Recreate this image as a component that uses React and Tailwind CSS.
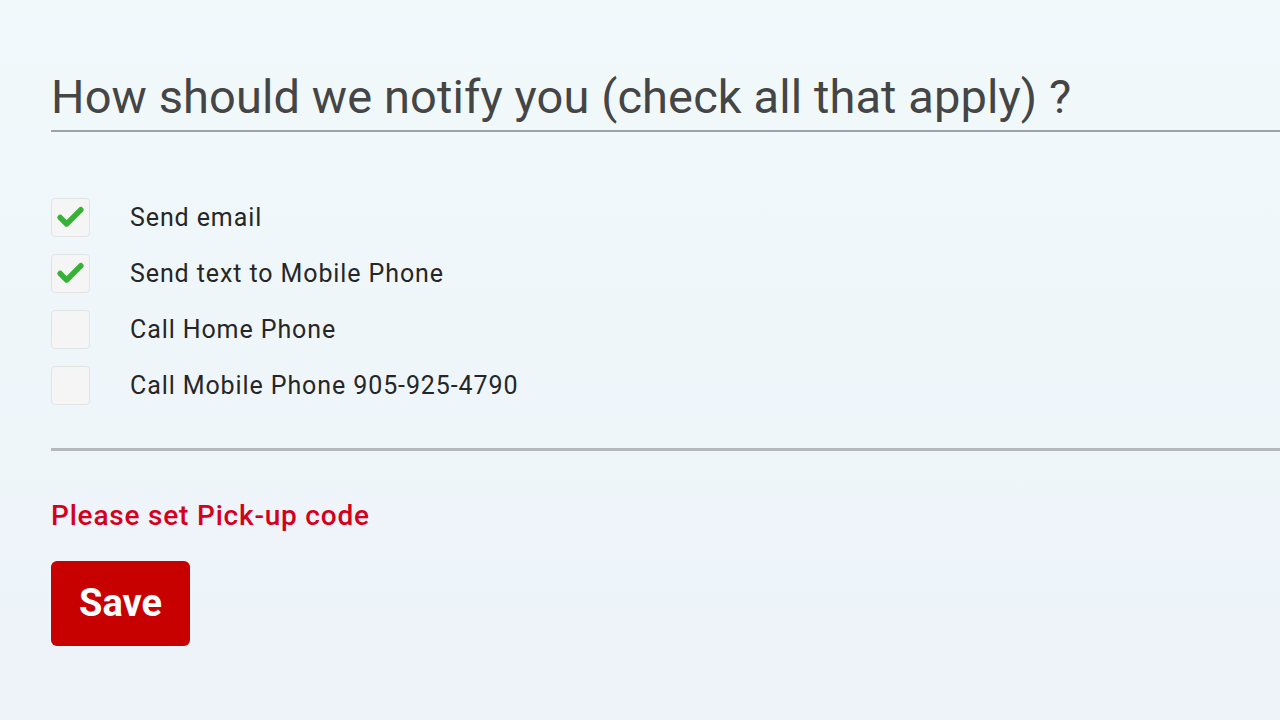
import { Check } from 'lucide-react';

const OPTIONS = [
    { label: 'Send email', checked: true },
    { label: 'Send text to Mobile Phone', checked: true },
    { label: 'Call Home Phone', checked: false },
    { label: 'Call Mobile Phone 905-925-4790', checked: false },
];

export default function App() {
    return (
        <div className="w-[1280px] h-[720px] overflow-hidden bg-gradient-to-b from-[#f1f9fb] to-[#edf3f9] font-['Roboto',sans-serif] pl-[51px] pt-[69px]">

            {/* heading */}
            <h1 className="text-[47px] leading-[56px] text-[#454545] tracking-[0.1px] pb-[5px] border-b-2 border-[#9ea3a7]">
                How should we notify you (check all that apply) ?
            </h1>

            {/* options */}
            <div className="flex flex-col gap-[17px] pt-[66px] pb-[43px] border-b-[3px] border-[#b5b9bb]">
                {OPTIONS.map((o, i) => (
                    <label key={i} className="flex items-center gap-[40px] h-[39px]">
                        <span className="w-[39px] h-[39px] rounded-[4px] bg-[#f5f5f5] border border-[#e2e4e4] flex items-center justify-center">
                            {o.checked && <Check className="w-[31px] h-[31px] text-[#36b236]" strokeWidth={4.2} />}
                        </span>
                        <span className="text-[25px] tracking-[0.9px] text-[#262626]">{o.label}</span>
                    </label>
                ))}
            </div>

            <p className="mt-[44px] text-[28px] tracking-[0.8px] font-medium text-[#d5001c]">Please set Pick-up code</p>

            <button className="mt-[24px] w-[139px] h-[85px] rounded-[6px] bg-[#c70000] text-white text-[38px] font-bold flex items-center justify-center">
                Save
            </button>
        </div>
    );
}
